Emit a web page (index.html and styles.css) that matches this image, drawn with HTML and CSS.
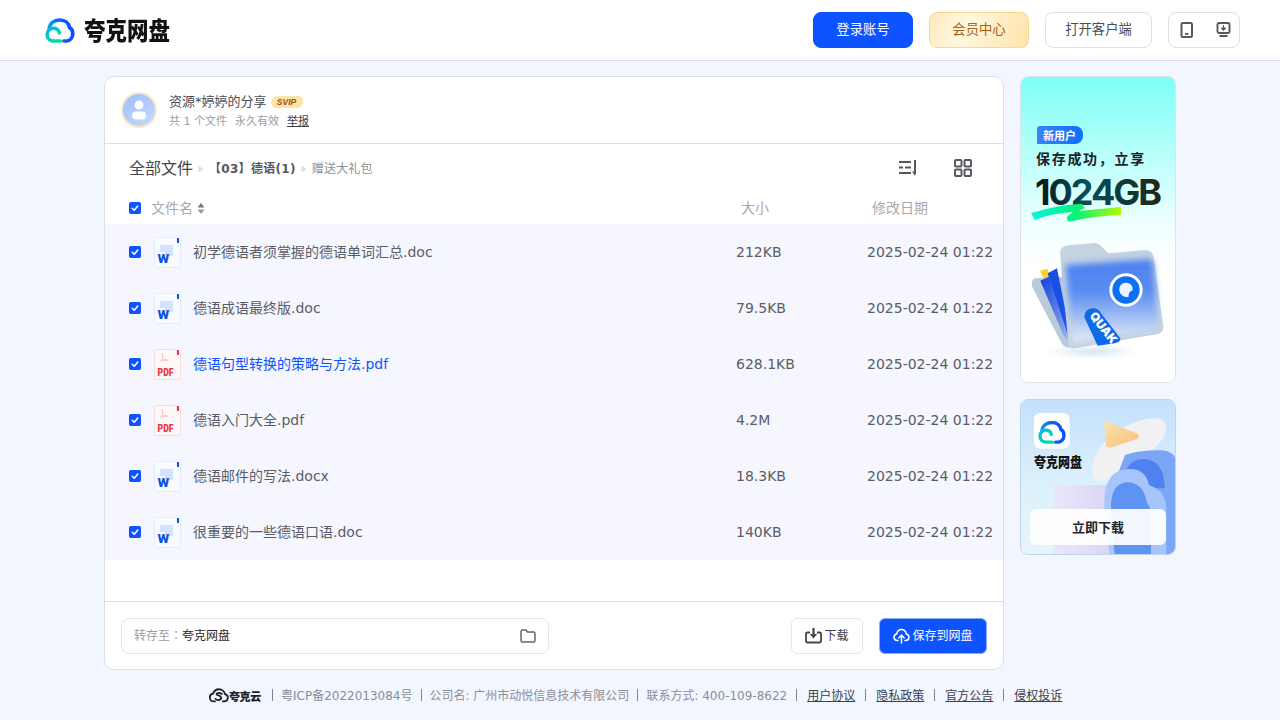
FILE: index.html
```html
<!DOCTYPE html>
<html lang="zh">
<head>
<meta charset="utf-8">
<title>夸克网盘</title>
<link rel="stylesheet" href="styles.css">
</head>
<body>
<svg class="defs" width="0" height="0">
  <defs>
    <linearGradient id="gBlue" x1="0" y1="0" x2="1" y2="0"><stop offset="0" stop-color="#0a9bf0"/><stop offset=".4" stop-color="#0d62fa"/><stop offset="1" stop-color="#0d4dff"/></linearGradient>
    <linearGradient id="gGreen" x1="0" y1="0" x2="1" y2="1"><stop offset="0" stop-color="#05b8f0"/><stop offset="1" stop-color="#05e08a"/></linearGradient>
    <symbol id="cloud" viewBox="135 52 90 76">
      <path d="M147 84C150 66 165 58 180 58C196 58 207 68 209 81C215 84 219 92 219 100C219 112 210 122 200 122H192" fill="none" stroke="url(#gBlue)" stroke-width="11" stroke-linecap="round"/>
      <path d="M181 122H160C149 122 141 113 141 102C141 91 150 83 160 83C169 83 176 89 178 97" fill="none" stroke="url(#gGreen)" stroke-width="11" stroke-linecap="round"/>
    </symbol>
    <symbol id="doc" viewBox="0 0 27 31">
      <path d="M1.500 .5H22V3.500H26.500V29a1.500 1.500 0 0 1-1.500 1.500H1.500A1 1 0 0 1 .5 29.500V1.500A1 1 0 0 1 1.500 .5Z" fill="#f7faff" stroke="#e3ecfb"/>
      <path d="M23 1H25V6H23Z" fill="#0e55d8"/>
      <path d="M6 8H19V19H11V15H6Z" fill="#d3e2f9"/>
      <text x="3.500" y="25.500" class="doc-letter">W</text>
    </symbol>
    <symbol id="pdf" viewBox="0 0 27 31">
      <path d="M1.500 .5H22V3.500H26.500V29a1.500 1.500 0 0 1-1.500 1.500H1.500A1 1 0 0 1 .5 29.500V1.500A1 1 0 0 1 1.500 .5Z" fill="#fff8f8" stroke="#fbdcdc"/>
      <path d="M23 1H25V6H23Z" fill="#e5383f"/>
      <path d="M8 4C9 8 9 11 6 13M8 9C10 11 12 11 14 11M7 12C9 11 12 11 13 12" fill="none" stroke="#f6b6b6" stroke-width=".9"/>
      <text x="3.500" y="26.500" class="pdf-letter" textLength="16" lengthAdjust="spacingAndGlyphs">PDF</text>
    </symbol>
    <symbol id="check" viewBox="0 0 12 12">
      <rect width="12" height="12" rx="2" fill="#0d53ff"/>
      <path d="M3.200 6.200 5.200 8.200 8.800 4" fill="none" stroke="#fff" stroke-width="1.500" stroke-linecap="round" stroke-linejoin="round"/>
    </symbol>
    <symbol id="tri" viewBox="0 0 6 8"><path d="M.5 .5 5.500 4 .5 7.500Z" fill="#dcdee3"/></symbol>
  </defs>
</svg>

<header class="topbar">
  <a class="brand">
    <svg class="brand-icon"><use href="#cloud"/></svg>
    <span class="brand-name">夸克网盘</span>
  </a>
  <nav class="top-actions">
    <button class="btn btn-login">登录账号</button>
    <button class="btn btn-vip">会员中心</button>
    <button class="btn btn-client">打开客户端</button>
    <div class="device-box">
      <svg width="16" height="18" viewBox="0 0 16 18"><rect x="2.500" y="2" width="10.500" height="14" rx="1.500" fill="none" stroke="#55585f" stroke-width="2"/><rect x="6" y="12" width="3.500" height="1.800" fill="#55585f"/></svg>
      <svg width="16" height="18" viewBox="0 0 16 18"><rect x="2.500" y="2" width="12" height="10" rx="1.500" fill="none" stroke="#55585f" stroke-width="1.900"/><path d="M8.500 4V7.500M6.300 7H10.700L8.500 9.500Z" fill="#55585f" stroke="#55585f" stroke-width="1"/><path d="M4.500 15H12.500" stroke="#55585f" stroke-width="2"/></svg>
    </div>
  </nav>
</header>

<main class="layout">
  <section class="card">
    <div class="sharer">
      <div class="avatar">
        <svg width="32" height="32" viewBox="0 0 32 32"><circle cx="16" cy="11" r="4.500" fill="#fff"/><rect x="9" y="17.500" width="14" height="8" rx="4" fill="#fff"/></svg>
      </div>
      <div class="sharer-text">
        <div class="sharer-name">资源*婷婷的分享
          <span class="svip">SVIP</span>
        </div>
        <div class="sharer-meta"><span>共 1 个文件</span><span>永久有效</span><a class="report">举报</a></div>
      </div>
    </div>

    <div class="crumbs">
      <span class="crumb-root">全部文件</span>
      <svg class="crumb-sep"><use href="#tri"/></svg>
      <span class="crumb-mid">【03】德语(1)</span>
      <svg class="crumb-sep"><use href="#tri"/></svg>
      <span class="crumb-last">赠送大礼包</span>
      <span class="crumb-tools">
        <svg width="20" height="18" viewBox="0 0 20 18"><path d="M1 3H13M1 8.500H5M7 8.500H13M1 14H13" fill="none" stroke="#55585f" stroke-width="2"/><path d="M17 1V15" fill="none" stroke="#55585f" stroke-width="2"/><path d="M14 12.500 17 17 18 12.500Z" fill="#55585f"/></svg>
        <svg width="18" height="18" viewBox="0 0 18 18"><g fill="none" stroke="#55585f" stroke-width="2"><rect x="1" y="1" width="6.500" height="6.500" rx="1"/><rect x="10.500" y="1" width="6.500" height="6.500" rx="1"/><rect x="1" y="10.500" width="6.500" height="6.500" rx="1"/><rect x="10.500" y="10.500" width="6.500" height="6.500" rx="1"/></g></svg>
      </span>
    </div>

    <div class="thead">
      <svg class="check"><use href="#check"/></svg>
      <span class="th-name">文件名
        <svg class="sort" width="8" height="11" viewBox="0 0 8 11"><path d="M4 0 7.500 4.500H.5Z" fill="#777"/><path d="M4 11 .5 6.500H7.500Z" fill="#999"/></svg>
      </span>
      <span class="th-size">大小</span>
      <span class="th-date">修改日期</span>
    </div>

    <div class="rows">
      <div class="row"><svg class="check"><use href="#check"/></svg><svg class="ficon"><use href="#doc"/></svg><span class="fname">初学德语者须掌握的德语单词汇总.doc</span><span class="fsize">212KB</span><span class="fdate">2025-02-24 01:22</span></div>
      <div class="row"><svg class="check"><use href="#check"/></svg><svg class="ficon"><use href="#doc"/></svg><span class="fname">德语成语最终版.doc</span><span class="fsize">79.5KB</span><span class="fdate">2025-02-24 01:22</span></div>
      <div class="row"><svg class="check"><use href="#check"/></svg><svg class="ficon"><use href="#pdf"/></svg><span class="fname fname-hover">德语句型转换的策略与方法.pdf</span><span class="fsize">628.1KB</span><span class="fdate">2025-02-24 01:22</span></div>
      <div class="row"><svg class="check"><use href="#check"/></svg><svg class="ficon"><use href="#pdf"/></svg><span class="fname">德语入门大全.pdf</span><span class="fsize">4.2M</span><span class="fdate">2025-02-24 01:22</span></div>
      <div class="row"><svg class="check"><use href="#check"/></svg><svg class="ficon"><use href="#doc"/></svg><span class="fname">德语邮件的写法.docx</span><span class="fsize">18.3KB</span><span class="fdate">2025-02-24 01:22</span></div>
      <div class="row"><svg class="check"><use href="#check"/></svg><svg class="ficon"><use href="#doc"/></svg><span class="fname">很重要的一些德语口语.doc</span><span class="fsize">140KB</span><span class="fdate">2025-02-24 01:22</span></div>
    </div>

    <div class="savebar">
      <div class="target">
        <span class="target-label" lang="zh-TW">转存至：</span><span class="target-value">夸克网盘</span>
        <svg class="target-icon" width="16" height="14" viewBox="0 0 16 14"><path d="M1 2.500A1.500 1.500 0 0 1 2.500 1H6L7.500 3H13.500A1.500 1.500 0 0 1 15 4.500V11.500A1.500 1.500 0 0 1 13.500 13H2.500A1.500 1.500 0 0 1 1 11.500Z" fill="none" stroke="#62656c" stroke-width="1.500"/></svg>
      </div>
      <button class="act act-down">
        <svg width="17" height="17" viewBox="0 0 17 17"><path d="M5 5.500H2.500A1.500 1.500 0 0 0 1 7V14A1.500 1.500 0 0 0 2.500 15.500H14.500A1.500 1.500 0 0 0 16 14V7A1.500 1.500 0 0 0 14.500 5.500H12" fill="none" stroke="#44464d" stroke-width="1.800"/><path d="M8.500 1V7" stroke="#44464d" stroke-width="2.200"/><path d="M4.800 7H12.200L8.500 11.500Z" fill="#44464d"/></svg>
        下载
      </button>
      <button class="act act-save">
        <svg width="17" height="16" viewBox="0 0 17 16"><path d="M5 12.500H4A3.300 3.300 0 0 1 3.600 6C4.200 3.300 6.200 1.500 8.500 1.500C10.800 1.500 12.800 3.300 13.400 6A3.300 3.300 0 0 1 13 12.500H12" fill="none" stroke="#fff" stroke-width="1.500" stroke-linecap="round"/><path d="M8.500 15V8M5.800 10 8.500 7 11.200 10" fill="none" stroke="#fff" stroke-width="1.500" stroke-linecap="round"/></svg>
        保存到网盘
      </button>
    </div>
  </section>

  <aside class="side">
    <div class="ad ad-tall">
      <svg width="154" height="305" viewBox="0 0 154 305">
        <defs>
          <linearGradient id="adBg" x1="0" y1="0" x2="0" y2="1"><stop offset="0" stop-color="#7dfff6"/><stop offset=".5" stop-color="#f2ffff"/><stop offset=".62" stop-color="#fff"/></linearGradient>
          <linearGradient id="badge" x1="0" y1="0" x2="1" y2="0"><stop offset="0" stop-color="#3b82f6"/><stop offset="1" stop-color="#0d70ff"/></linearGradient>
          <linearGradient id="num" x1="0" y1="0" x2="1" y2="0"><stop offset="0" stop-color="#0a1414"/><stop offset=".4" stop-color="#06505a"/><stop offset=".7" stop-color="#0a3a3c"/><stop offset="1" stop-color="#2a2410"/></linearGradient>
          <linearGradient id="brush" x1="0" y1="0" x2="1" y2="0"><stop offset="0" stop-color="#06f5e0"/><stop offset=".5" stop-color="#06f27a"/><stop offset="1" stop-color="#b4f905"/></linearGradient>
          <linearGradient id="folderFace" x1="0" y1="0" x2="0" y2="1"><stop offset="0" stop-color="#4a80f2"/><stop offset=".4" stop-color="#5b8df0"/><stop offset="1" stop-color="#e6eef6"/></linearGradient>
          <linearGradient id="paperBlue" x1="0" y1="0" x2="1" y2="1"><stop offset="0" stop-color="#0d3fe0"/><stop offset="1" stop-color="#9fb6ee"/></linearGradient>
          <radialGradient id="shadow"><stop offset="0" stop-color="#d5e6f2"/><stop offset="1" stop-color="#fff"/></radialGradient>
          <filter id="soft" x="-10%" y="-10%" width="120%" height="120%"><feGaussianBlur stdDeviation="9"/></filter>
          <clipPath id="ribbonClip"><path d="M208 262Q208 236 235 234Q250 235 258 250L316 325Q318 335 300 340L248 347Z"/></clipPath>
        </defs>
        <rect width="154" height="305" fill="url(#adBg)"/>
        <path d="M16 52a3 3 0 0 1 3-3H54a8 8 0 0 1 8 8V59a8 8 0 0 1-8 8H16Z" fill="url(#badge)"/>
        <text x="22" y="62.500" class="ad-badge">新用户</text>
        <text x="15" y="87" class="ad-title">保存成功，立享</text>
        <text x="14" y="128" class="ad-num" fill="url(#num)">1024GB</text>
        <path d="M10 136C28 131 45 127 61 127L64 131 58 134C72 133 86 131 100 130V138C84 138 66 141 49 144.500C45 144 45 140 48 138L52 135C38 136 26 138 14 143Z" fill="url(#brush)"/>
        <g transform="translate(-6 153) scale(.3333)">
          <ellipse cx="232" cy="365" rx="140" ry="22" fill="url(#shadow)"/>
          <path d="M75 122 97 116 108 155 92 160Z" fill="#ffd21f"/>
          <path d="M60 145Q46 150 52 172L140 340Q150 358 172 350L150 140Z" fill="#b9cadb"/>
          <path d="M76 152 102 140 165 335Q150 325 145 315Z" fill="url(#paperBlue)"/>
          <path d="M98 130 126 115 172 345Q165 338 160 320Z" fill="#1a4fe6"/>
          <path d="M135 70Q136 47 160 46L238 39Q250 39 258 48L280 70L390 60Q412 60 416 82L445 290Q446 308 428 312L180 355Q162 358 160 340Z" fill="#c3d3e2"/>
          <path d="M152 105 398 88Q412 88 415 104L430 282Q430 296 418 298L182 336Q172 336 170 326Z" fill="url(#folderFace)" filter="url(#soft)"/>
          <circle cx="333" cy="180" r="50" fill="#fff"/>
          <circle cx="333" cy="180" r="41" fill="#0d6ff5"/>
          <path d="M333 158C348 158 356 170 352 182C345 182 340 190 341 200C325 205 313 192 313 178C313 166 322 158 333 158Z" fill="#eaf3ff"/>
          <path d="M208 262Q208 236 235 234Q250 235 258 250L316 325Q318 335 300 340L248 347Z" fill="#0d6ae8"/>
          <g clip-path="url(#ribbonClip)"><text transform="translate(222 258) rotate(52)" class="ad-ribbon">QUAK</text></g>
        </g>
      </svg>
    </div>
    <div class="ad ad-short">
      <svg width="154" height="154" viewBox="0 0 154 154">
        <defs>
          <linearGradient id="ad2Bg" x1="0" y1="0" x2="0" y2="1"><stop offset="0" stop-color="#c4e0fb"/><stop offset=".6" stop-color="#ddf2fc"/><stop offset="1" stop-color="#e6f4fb"/></linearGradient>
          <linearGradient id="ad2Blue" x1="0" y1="0" x2="1" y2="1"><stop offset="0" stop-color="#a8c8fb"/><stop offset="1" stop-color="#6e9af4"/></linearGradient>
          <linearGradient id="ad2Play" x1="0" y1="0" x2="1" y2="1"><stop offset="0" stop-color="#fbe3ac"/><stop offset="1" stop-color="#f6c079"/></linearGradient>
          <linearGradient id="ad2Box" x1="0" y1="0" x2="1" y2="0"><stop offset="0" stop-color="#ebe7fa"/><stop offset="1" stop-color="#d6d4f5"/></linearGradient>
        </defs>
        <rect width="154" height="154" fill="url(#ad2Bg)"/>
        <g transform="translate(-6 -5) scale(.3333)">
          <path d="M232 215C240 140 340 70 425 70C455 72 460 100 445 130C410 170 340 260 262 262C240 262 230 240 232 215Z" fill="#f1f1f3"/>
          <path d="M115 270H300V480H115Z" fill="url(#ad2Box)"/>
          <path d="M330 180Q370 165 440 166 482 170 482 200V480H300V260Z" fill="#7ca6f5"/>
          <path d="M325 245Q340 190 390 192 430 195 445 240L450 280H330Z" fill="#4f82ee"/>
          <path d="M268 320Q268 222 345 222 392 222 402 270L420 278Q456 298 454 350V480H285Q268 400 268 320Z" fill="#a6c6fb"/>
          <path d="M288 330Q290 262 340 262 385 265 395 320L408 345V480H300Q288 400 288 330Z" fill="#5f93f2"/>
          <path d="M268 85Q262 78 275 80L365 115Q380 125 365 133L285 158Q272 158 272 145Z" fill="url(#ad2Play)"/>
          <rect x="57" y="54" width="107" height="107" rx="18" fill="#fff"/>
          <svg x="69" y="77" width="84" height="70"><use href="#cloud"/></svg>
        </g>
        <text transform="translate(13 66.500) scale(1 1.150)" class="ad2-name">夸克网盘</text>
      </svg>
      <div class="ad2-cta">立即下载</div>
    </div>
  </aside>
</main>

<footer class="footer">
  <span class="foot-logo">
    <svg width="20" height="16" viewBox="0 0 20 16"><path d="M6 13.500H5A4 4 0 0 1 4 5.600C5 3 7.200 1.200 10 1.200C13 1.200 15.500 3.300 16 6A3.800 3.800 0 0 1 15 13.500H14" fill="none" stroke="#1d2029" stroke-width="1.800" stroke-linecap="round"/><path d="M6.500 11C9 13.500 13 11.500 12 9 11 6.500 8 8 7.500 6 8 4.500 11 4.500 13 6" fill="none" stroke="#1d2029" stroke-width="1.800" stroke-linecap="round"/></svg>
    <b>夸克云</b>
  </span>
  <span class="foot-item foot-first">粤ICP备2022013084号</span>
  <span class="foot-item">公司名: 广州市动悦信息技术有限公司</span>
  <span class="foot-item">联系方式: 400-109-8622</span>
  <a class="foot-item foot-link foot-link-first"><u>用户协议</u></a>
  <a class="foot-item foot-link"><u>隐私政策</u></a>
  <a class="foot-item foot-link"><u>官方公告</u></a>
  <a class="foot-item foot-link"><u>侵权投诉</u></a>
</footer>
</body>
</html>
```

FILE: styles.css
```css
* { box-sizing: border-box; }
html, body { margin: 0; height: 100%; }
body {
  width: 1280px;
  height: 720px;
  overflow: hidden;
  background: #f2f6ff;
  color: #33363d;
  font-family: "DejaVu Sans", "Noto Sans CJK SC", sans-serif;
  line-height: 20px;
}
.defs { position: absolute; }
button { font-family: inherit; line-height: 20px; cursor: pointer; }

.doc-letter { font: 900 13.500px "Roboto", sans-serif; fill: #0e55d8; }
.pdf-letter { font: 900 11px "Roboto", sans-serif; fill: #e5383f; }

.topbar {
  height: 61px;
  background: #fff;
  border-bottom: 1px solid #dcdfe8;
  display: flex;
  align-items: center;
  justify-content: space-between;
  padding: 0 40px 0 45px;
}
.brand { display: flex; align-items: center; gap: 9px; }
.brand-icon { width: 30px; height: 25px; }
.brand-name {
  font: 900 21.500px/30px "Noto Sans CJK SC", sans-serif;
  color: #111;
  transform: scaleY(1.150);
}
.top-actions { display: flex; align-items: center; gap: 16px; }
.btn {
  height: 36px;
  width: 100px;
  border-radius: 8px;
  border: 1px solid #e0e1e6;
  font-size: 13.330px;
  background: #fff;
  padding: 0;
}
.btn-login { background: #0d53ff; border-color: #0d53ff; color: #fff; }
.btn-vip {
  background: linear-gradient(110deg, #ffe9bf, #fff8de 35%, #ffe3ac);
  border-color: #fbd98c;
  color: #a8610f;
}
.btn-client { width: 107px; color: #4a4d55; }
.device-box {
  width: 72px;
  height: 36px;
  border: 1px solid #e0e1e6;
  border-radius: 8px;
  display: flex;
  align-items: center;
  justify-content: space-between;
  padding: 0 8px 0 10px;
}

.layout {
  display: flex;
  gap: 16px;
  width: 1072px;
  margin: 15px auto 0;
}
.card {
  width: 900px;
  height: 594px;
  background: #fff;
  border: 1px solid #dcdfe8;
  border-radius: 10px;
  overflow: hidden;
  display: flex;
  flex-direction: column;
}
.sharer {
  height: 67px;
  flex: none;
  border-bottom: 1px solid #dcdfe3;
  display: flex;
  align-items: center;
  padding-left: 16px;
  gap: 12px;
}
.avatar {
  width: 36px;
  height: 36px;
  border-radius: 50%;
  border: 2px solid #fde9c0;
  background: linear-gradient(145deg, #9dbdfd, #c6dafd);
}
.avatar svg { display: block; }
.sharer-text { display: flex; flex-direction: column; gap: 2px; }
.sharer-name {
  font-size: 13px;
  line-height: 20px;
  color: #4a4d55;
  display: flex;
  align-items: center;
  gap: 4px;
}
.svip {
  font: italic 800 8.500px/12px "Liberation Sans", sans-serif;
  color: #a2500c;
  background: linear-gradient(90deg, #fee3ad, #fde2a8);
  border-radius: 7px 5px 6px 5px;
  padding: 0 5px;
  height: 12px;
  width: 32px;
  text-align: center;
}
.sharer-meta {
  display: flex;
  gap: 8px;
  font-size: 11px;
  line-height: 15px;
  color: #9a9ca6;
}
.report { color: #3d404c; text-decoration: underline; }

.crumbs {
  flex: none;
  height: 50px;
  display: flex;
  align-items: center;
  padding-left: 24px;
  font-size: 12px;
}
.crumb-root { font-size: 16px; color: #44474e; }
.crumb-sep { width: 6px; height: 8px; margin: 0 5px; }
.crumb-mid { font-weight: 700; color: #55585f; letter-spacing: .3px; }
.crumb-last { color: #8c8e96; letter-spacing: .2px; }
.crumb-tools {
  margin: -2px 31px 0 auto;
  width: 74px;
  display: flex;
  justify-content: space-between;
  align-items: center;
}

.thead {
  flex: none;
  height: 28px;
  margin-bottom: 2px;
  display: flex;
  align-items: center;
  padding-left: 24px;
  font-size: 14px;
  color: #a7a9ae;
}
.check { width: 12px; height: 12px; flex: none; }
.th-name { margin-left: 10px; width: 590px; display: flex; align-items: center; gap: 4px; }
.th-size { width: 131px; }

.rows { flex: none; }
.row {
  height: 56px;
  background: #f5f6fe;
  display: flex;
  align-items: center;
  padding-left: 24px;
  font-size: 14px;
  color: #5a5d66;
  white-space: nowrap;
}
.ficon { width: 27px; height: 31px; margin-left: 13px; flex: none; }
.fname { margin-left: 12px; width: 543px; }
.fname-hover { color: #0d53ff; }
.fsize { width: 131px; }

.savebar {
  margin-top: auto;
  flex: none;
  height: 68px;
  border-top: 1px solid #dcdfe3;
  display: flex;
  align-items: center;
  padding: 0 16px;
}
.target {
  width: 428px;
  height: 36px;
  border: 1px solid #e4e6ea;
  border-radius: 8px;
  display: flex;
  align-items: center;
  padding: 0 12px;
  font-size: 12px;
}
.target-label { color: #9a9ca6; font-family: "DejaVu Sans", "Noto Sans CJK TC", sans-serif; }
.target-value { color: #26282e; }
.target-icon { margin-left: auto; }
.act {
  height: 36px;
  border-radius: 6px;
  font-size: 12px;
  display: flex;
  align-items: center;
  justify-content: center;
  gap: 2px;
  padding: 0;
}
.act-down {
  width: 72px;
  margin-left: auto;
  background: #fff;
  border: 1px solid #e4e6ea;
  color: #3e4048;
}
.act-save {
  width: 108px;
  margin-left: 16px;
  background: #0d53ff;
  border: 1px solid #8aa8f5;
  color: #fff;
}

.side { width: 156px; display: flex; flex-direction: column; gap: 16px; }
.ad {
  width: 156px;
  border: 1px solid #dfe2e8;
  border-radius: 8px;
  overflow: hidden;
  position: relative;
}
.ad svg { display: block; }
.ad-tall { height: 307px; background: #fff; }
.ad-short { height: 156px; border-color: #bcd5ee; }
.ad-badge { font: 700 11px "Noto Sans CJK SC", sans-serif; fill: #fff; }
.ad-title { font: 700 14px "Noto Sans CJK SC", sans-serif; fill: #1e2128; letter-spacing: 1.700px; }
.ad-num { font: 700 36px "Inter", sans-serif; letter-spacing: -2px; }
.ad-ribbon { font: 900 36px "Inter", sans-serif; fill: #fff; }
.ad2-name { font: 900 12px "Noto Sans CJK SC", sans-serif; fill: #111; }
.ad2-cta {
  position: absolute;
  left: 9px;
  bottom: 9px;
  width: 136px;
  height: 36px;
  border-radius: 6px;
  background: rgba(255, 255, 255, .93);
  font: 700 13px/36px "Noto Sans CJK SC", sans-serif;
  color: #23252b;
  text-align: center;
}

.footer {
  width: 853px;
  margin: 16px 0 0 209px;
  display: flex;
  align-items: center;
  font-size: 12px;
  line-height: 20px;
  color: #8a8e9c;
  white-space: nowrap;
}
.foot-logo { display: flex; align-items: center; gap: 0; color: #1d2029; width: 52px; }
.foot-logo b { font: 900 11px "Noto Sans CJK SC", sans-serif; letter-spacing: -.3px; }
.foot-item { position: relative; margin-left: 17px; }
.foot-item::before {
  content: "";
  position: absolute;
  left: -9px;
  top: 3px;
  height: 12px;
  border-left: 1px solid #80838e;
}
.foot-first { margin-left: 20px; }
.foot-link { color: #3d404c; margin-left: 21px; }
.foot-link::before { left: -11px; }
.foot-link-first { margin-left: 20px; }
```
